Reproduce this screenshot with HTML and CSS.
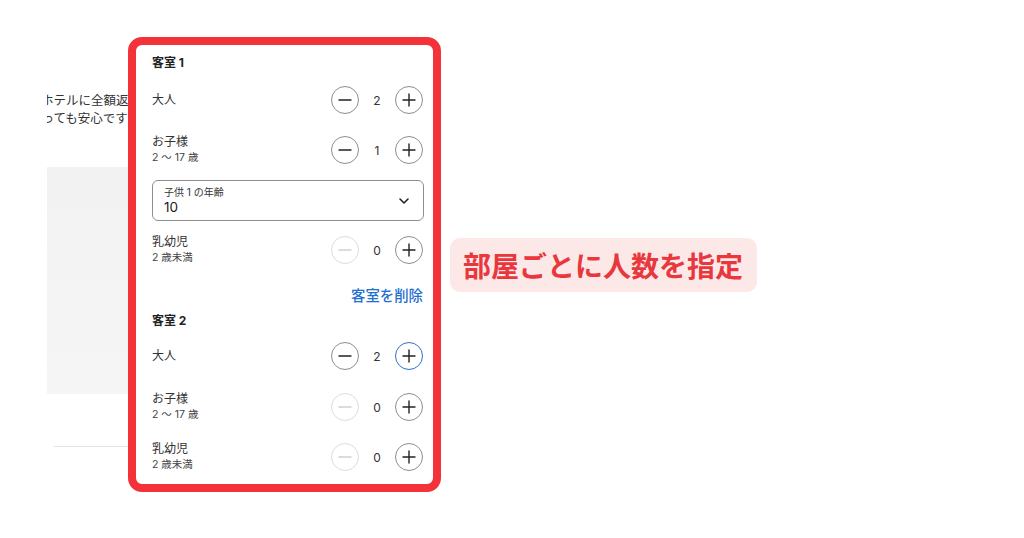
FILE: index.html
```html
<!DOCTYPE html>
<html lang="ja">
<head>
<meta charset="utf-8">
<link rel="stylesheet" href="styles.css">
</head>
<body>
<div class="stage">
  <div class="page-bg">
    <div class="note">
      <p class="note-line">ホテルに全額返金</p>
      <p class="note-line second">なっても安心です</p>
    </div>
    <div class="photo"></div>
    <div class="rule"></div>
  </div>

  <div class="popup">
    <div class="room-title first">客室 1</div>

    <div class="row">
      <div class="label"><div class="name">大人</div></div>
      <div class="stepper">
        <span class="btn"><svg viewBox="0 0 28 28"><path d="M8 14h12"/></svg></span>
        <span class="count">2</span>
        <span class="btn"><svg viewBox="0 0 28 28"><path d="M8 14h12M14 8v12"/></svg></span>
      </div>
    </div>

    <div class="row">
      <div class="label"><div class="name">お子様</div><div class="sub">2 〜 17 歳</div></div>
      <div class="stepper">
        <span class="btn"><svg viewBox="0 0 28 28"><path d="M8 14h12"/></svg></span>
        <span class="count">1</span>
        <span class="btn"><svg viewBox="0 0 28 28"><path d="M8 14h12M14 8v12"/></svg></span>
      </div>
    </div>

    <div class="select">
      <div class="select-text">
        <div class="select-label">子供 1 の年齢</div>
        <div class="select-value">10</div>
      </div>
      <svg class="chev" viewBox="0 0 12 8"><path d="M2 2l4 4 4-4"/></svg>
    </div>

    <div class="row row-infant">
      <div class="label"><div class="name">乳幼児</div><div class="sub">2 歳未満</div></div>
      <div class="stepper">
        <span class="btn disabled"><svg viewBox="0 0 28 28"><path d="M8 14h12"/></svg></span>
        <span class="count">0</span>
        <span class="btn"><svg viewBox="0 0 28 28"><path d="M8 14h12M14 8v12"/></svg></span>
      </div>
    </div>

    <div class="remove-line"><span class="remove">客室を削除</span></div>

    <div class="room-title">客室 2</div>

    <div class="row row-r2">
      <div class="label"><div class="name">大人</div></div>
      <div class="stepper">
        <span class="btn"><svg viewBox="0 0 28 28"><path d="M8 14h12"/></svg></span>
        <span class="count">2</span>
        <span class="btn focus"><svg viewBox="0 0 28 28"><path d="M8 14h12M14 8v12"/></svg></span>
      </div>
    </div>

    <div class="row row-gap">
      <div class="label"><div class="name">お子様</div><div class="sub">2 〜 17 歳</div></div>
      <div class="stepper">
        <span class="btn disabled"><svg viewBox="0 0 28 28"><path d="M8 14h12"/></svg></span>
        <span class="count">0</span>
        <span class="btn"><svg viewBox="0 0 28 28"><path d="M8 14h12M14 8v12"/></svg></span>
      </div>
    </div>

    <div class="row row-gap2">
      <div class="label"><div class="name">乳幼児</div><div class="sub">2 歳未満</div></div>
      <div class="stepper">
        <span class="btn disabled"><svg viewBox="0 0 28 28"><path d="M8 14h12"/></svg></span>
        <span class="count">0</span>
        <span class="btn"><svg viewBox="0 0 28 28"><path d="M8 14h12M14 8v12"/></svg></span>
      </div>
    </div>
  </div>

  <div class="callout">部屋ごとに人数を指定</div>
</div>
</body>
</html>
```

FILE: styles.css
```css
* { box-sizing: border-box; }
html, body { margin: 0; padding: 0; background: #fff; }
body {
  font-family: Inter, "Noto Sans CJK JP", sans-serif;
  color: #222;
}
.stage {
  position: relative;
  width: 1024px;
  height: 538px;
  overflow: hidden;
}
.page-bg {
  padding-left: 47px;
  padding-top: 92px;
}
.note {
  width: 81px;
  overflow: hidden;
}
.note-line {
  margin: 0 0 0 -6px;
  white-space: nowrap;
  font-size: 12.5px;
  line-height: 18px;
  color: #333;
}
.note-line.second { margin-left: -18px; }
.photo {
  margin-top: 39px;
  width: 100px;
  height: 227px;
  background: linear-gradient(180deg, #f2f2f2, #f5f5f5);
}
.rule {
  margin: 52px 0 0 7px;
  width: 90px;
  height: 1px;
  background: #e3e3e3;
}

/* popup */
.popup {
  position: absolute;
  left: 128px;
  top: 37px;
  width: 313px;
  height: 455px;
  border: 8px solid #f4323a;
  border-radius: 14px;
  background: #fff;
  padding: 0 10px 0 16px;
}
.room-title {
  font-size: 12px;
  font-weight: 700;
  line-height: 16px;
  color: #222;
  margin-top: 7px;
}
.room-title.first { margin-top: 10px; }
.row {
  display: flex;
  align-items: center;
  justify-content: space-between;
  height: 40px;
}
.room-title.first + .row { margin-top: 9px; }
.row + .row { margin-top: 10px; }
.row-r2 { margin-top: 7px; }
.row.row-gap { margin-top: 11px; }
.row.row-gap2 { margin-top: 10px; }
.name {
  font-size: 12px;
  line-height: 16px;
  color: #333;
}
.sub {
  font-size: 10.5px;
  line-height: 16px;
  color: #444;
}
.stepper {
  display: flex;
  align-items: center;
}
.btn {
  width: 28px;
  height: 28px;
  border-radius: 50%;
  border: 1px solid #8e8e8e;
  display: flex;
  align-items: center;
  justify-content: center;
}
.btn svg {
  width: 28px;
  height: 28px;
  flex: none;
  fill: none;
  stroke: #222;
  stroke-width: 1.4;
  stroke-linecap: round;
}
.btn.disabled { border-color: #dcdcdc; }
.btn.disabled svg { stroke: #d0d0d0; }
.btn.focus { border: 1.5px solid #2f6fcf; }
.count {
  width: 36px;
  text-align: center;
  font-size: 12px;
  color: #333;
}

.select {
  margin-top: 10px;
  margin-right: -1px;
  height: 41px;
  border: 1px solid #8e8e8e;
  border-radius: 6px;
  display: flex;
  align-items: center;
  justify-content: space-between;
  padding: 0 13px 0 11px;
}
.select-label {
  font-size: 10px;
  line-height: 12px;
  color: #333;
}
.select-value {
  font-size: 13.5px;
  line-height: 18px;
  color: #222;
}
.chev {
  width: 12px;
  height: 8px;
  fill: none;
  stroke: #222;
  stroke-width: 1.6;
  stroke-linecap: round;
  stroke-linejoin: round;
}
.row-infant { margin-top: 9px; }
.remove-line {
  margin-top: 15px;
  text-align: right;
  line-height: 20px;
}
.remove {
  font-size: 14.4px;
  font-weight: 500;
  color: #1f6fd0;
}

/* annotation */
.callout {
  position: absolute;
  left: 450px;
  top: 238px;
  width: 307px;
  height: 54px;
  border-radius: 10px;
  background: #fde8e8;
  color: #e8383d;
  font-family: "Noto Sans CJK JP", sans-serif;
  font-weight: 700;
  font-size: 28px;
  line-height: 54px;
  padding-left: 13px;
  white-space: nowrap;
}
```
